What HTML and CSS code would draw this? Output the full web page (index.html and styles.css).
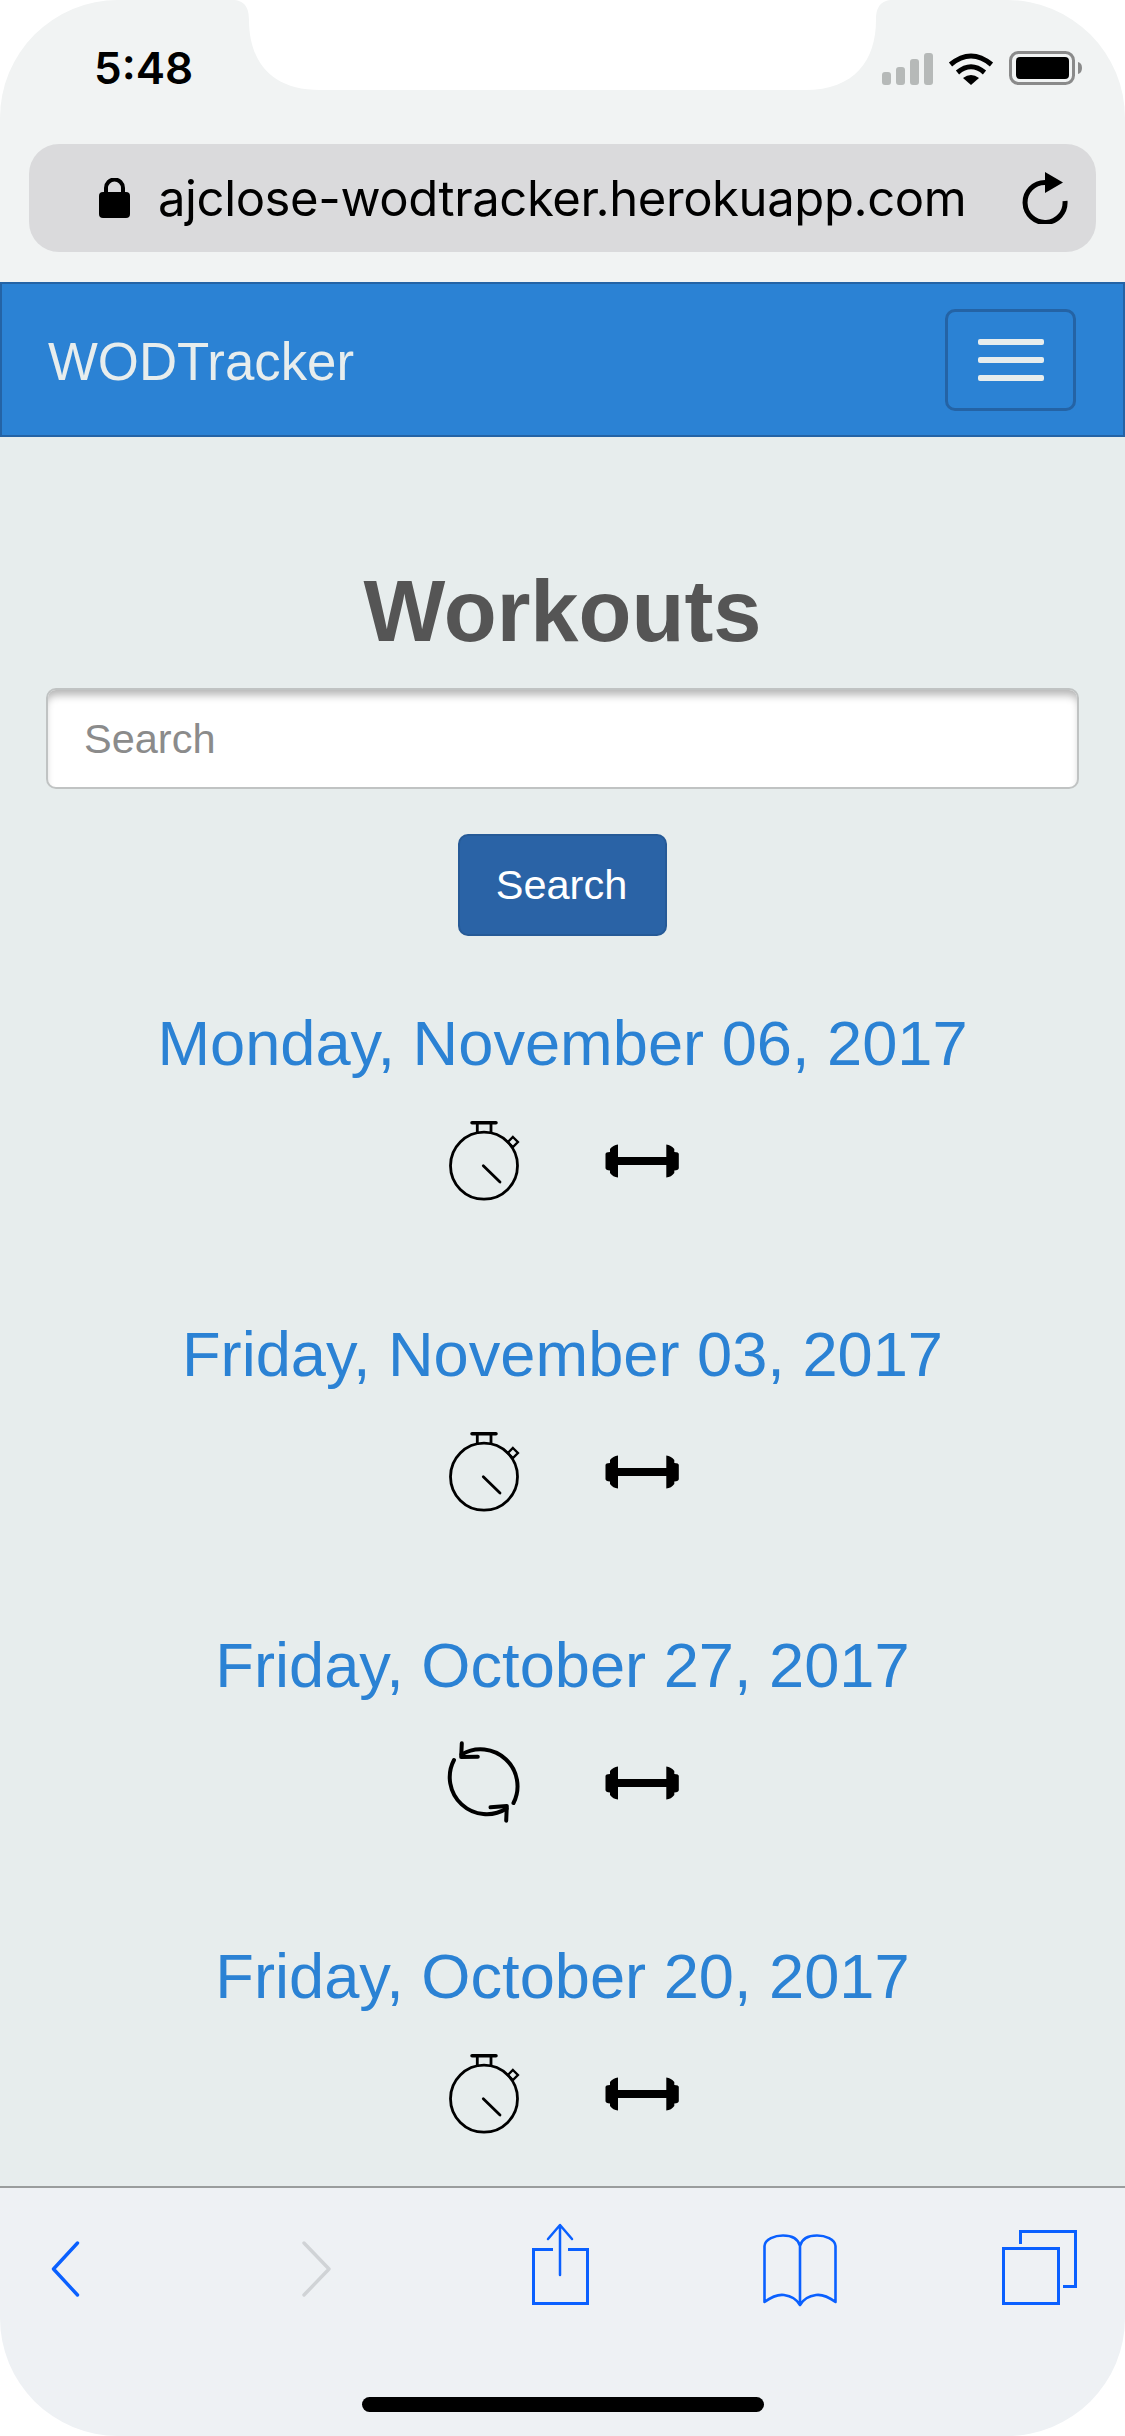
FILE: index.html
```html
<!DOCTYPE HTML>
<html>
<head>
    <meta charset="utf-8">
    <title>WODTracker</title>
    <link rel="stylesheet" href="styles.css">
</head>
<body>
    <svg class="defs" width="0" height="0">
        <symbol id="stopwatch" viewBox="0 0 90 90">
            <circle cx="45" cy="49.7" r="33.500" fill="none" stroke="#000" stroke-width="2.800"/>
            <path d="M33 6.700H57" stroke="#000" stroke-width="3.500" stroke-linecap="round"/>
            <path d="M38.300 7V18M52 7V18" stroke="#000" stroke-width="2.800"/>
            <path d="M73.900 21L78.900 26L73.900 31L68.900 26Z" fill="none" stroke="#000" stroke-width="2.400"/>
            <path d="M44.300 49.700L61 66" stroke="#000" stroke-width="2.800" stroke-linecap="round"/>
        </symbol>
        <symbol id="barbell" viewBox="0 0 90 90">
            <path d="M21 28.500Q16 29 13 33V36Q8.500 36 8.500 38V52Q8.500 54 13 54.500V57Q16 61 21 61.500V49H69.300V61.500Q74.300 61 77.300 57V54.500Q81.800 54 81.800 52V38Q81.800 36 77.300 36V33Q74.300 29 69.300 28.500V41H21Z"/>
        </symbol>
        <symbol id="rounds" viewBox="0 0 90 90">
            <g fill="none" stroke="#000" stroke-width="4" stroke-linecap="round" stroke-linejoin="round">
                <path d="M22.500 16.500A37 37 0 0 1 74.500 65"/>
                <path d="M67.500 70.500A37 37 0 0 1 15 22"/>
                <path d="M22.800 5.300L22.200 19L38.800 18.700"/>
                <path d="M51.500 69.300L67.800 68L67.200 82.700"/>
            </g>
        </symbol>
    </svg>

    <div class="screen">
        <svg class="notch" width="1125" height="92" viewBox="0 0 1125 92">
            <path d="M232 0C245 0 249 8 249 20C249 60 270 90 320 90H805C855 90 876 60 876 20C876 8 880 0 893 0Z" fill="#fff"/>
        </svg>

        <div class="chrome">
            <div class="status">
                <span class="time">5:48</span>
                <div class="status-icons">
                    <svg width="51" height="33" viewBox="0 0 51 33" fill="#b6b9b8">
                        <rect x="0" y="20" width="9" height="13" rx="3"/>
                        <rect x="14" y="15" width="9" height="18" rx="3"/>
                        <rect x="28" y="7" width="9" height="26" rx="3"/>
                        <rect x="42" y="1" width="9" height="32" rx="3"/>
                    </svg>
                    <svg class="wifi" width="46" height="33" viewBox="0 0 46 33">
                        <path d="M2.500 12.500Q23 -4.500 43.500 12.500M9.500 20.500Q23 9 36.500 20.500" fill="none" stroke="#000" stroke-width="5"/>
                        <path d="M15 26Q23 20 31 26L23 33Z"/>
                    </svg>
                    <svg class="battery" width="73" height="34" viewBox="0 0 73 34">
                        <rect x="1.500" y="1.500" width="63" height="31" rx="8" fill="none" stroke="#8a8a8a" stroke-width="3"/>
                        <rect x="7" y="6" width="53" height="22" rx="4"/>
                        <path d="M69 11Q73 12 73 17Q73 22 69 23Z" fill="#8a8a8a"/>
                    </svg>
                </div>
            </div>
            <div class="urlbar">
                <svg class="lock" width="31" height="40" viewBox="0 0 31 40">
                    <path d="M7 16V10A8.500 8.500 0 0 1 24 10V16" fill="none" stroke="#000" stroke-width="4"/>
                    <rect x="0" y="14" width="31" height="26" rx="4"/>
                </svg>
                <span class="url">ajclose-wodtracker.herokuapp.com</span>
                <svg class="reload" width="46" height="52" viewBox="0 0 46 52">
                    <path d="M23 10.500A20 20 0 1 0 43 29" fill="none" stroke="#000" stroke-width="5"/>
                    <path d="M23 0L41 10.500L23 21Z"/>
                </svg>
            </div>
        </div>

        <nav class="navbar">
            <a class="brand">WODTracker</a>
            <div class="toggle">
                <span></span>
                <span></span>
                <span></span>
            </div>
        </nav>

        <div class="main">
            <h1>Workouts</h1>
            <input class="search-input" type="text" placeholder="Search">
            <div class="search-btn">Search</div>

            <div class="workout">
                <a class="date">Monday, November 06, 2017</a>
                <div class="kinds">
                    <svg><use href="#stopwatch"/></svg>
                    <svg><use href="#barbell"/></svg>
                </div>
            </div>
            <div class="workout">
                <a class="date">Friday, November 03, 2017</a>
                <div class="kinds">
                    <svg><use href="#stopwatch"/></svg>
                    <svg><use href="#barbell"/></svg>
                </div>
            </div>
            <div class="workout">
                <a class="date">Friday, October 27, 2017</a>
                <div class="kinds">
                    <svg><use href="#rounds"/></svg>
                    <svg><use href="#barbell"/></svg>
                </div>
            </div>
            <div class="workout">
                <a class="date">Friday, October 20, 2017</a>
                <div class="kinds">
                    <svg><use href="#stopwatch"/></svg>
                    <svg><use href="#barbell"/></svg>
                </div>
            </div>
        </div>

        <div class="toolbar">
            <div class="tools">
                <svg viewBox="0 0 90 90"><path d="M57.500 21L33.500 47L57.500 73" stroke-width="3.400" stroke-linecap="round" stroke-linejoin="round"/></svg>
                <svg viewBox="0 0 90 90"><path class="off" d="M33 21L58 47L33 73" stroke-width="3.400" stroke-linecap="round" stroke-linejoin="round"/></svg>
                <svg viewBox="0 0 90 90">
                    <path d="M38 27.500H18.500V81.500H72.500V27.500H53" stroke-width="3"/>
                    <path d="M45 4V53M33 17L45 3L57 17" stroke-width="2.500" stroke-linecap="round" stroke-linejoin="round"/>
                </svg>
                <svg viewBox="0 0 90 90">
                    <path d="M45 24C43 16 36 13.500 28 13.500C20 13.500 10 17 9.500 24V80C15 76 22 72 29 73C36 74 41 76 45 83C49 76 54 74 61 73C68 72 75 76 80.500 80V24C80 17 70 13.500 62 13.500C54 13.500 47 16 45 24V82" stroke-width="2.600" stroke-linejoin="round"/>
                </svg>
                <svg viewBox="0 0 90 90">
                    <rect x="8.500" y="26.500" width="55" height="55" stroke-width="3"/>
                    <path d="M25.500 22V9.500H80.500V64.500H68" stroke-width="3"/>
                </svg>
            </div>
            <div class="home"></div>
        </div>
    </div>
</body>
</html>
```

FILE: styles.css
```css
body
{
    margin: 0;
    background: #fff;
    font-family: "Liberation Sans", Arial, sans-serif;
}

.defs
{
    display: block;
    height: 0;
}

.screen
{
    position: relative;
    display: flex;
    flex-direction: column;
    height: 2436px;
    border-radius: 118px;
    overflow: hidden;
}

.notch
{
    position: absolute;
    top: 0;
    left: 0;
}

/* browser chrome */

.chrome
{
    height: 282px;
    padding: 0 29px;
    box-sizing: border-box;
    background: #f1f3f3;
}

.status
{
    display: flex;
    justify-content: space-between;
    align-items: center;
    height: 144px;
    padding: 0 14px 8px 65px;
    box-sizing: border-box;
}

.time
{
    font-family: Inter, sans-serif;
    font-weight: 600;
    font-size: 44px;
    color: #000;
}

.status-icons
{
    display: flex;
    align-items: center;
}

.wifi { margin-left: 15px; }
.battery { margin-left: 15px; }

.urlbar
{
    display: flex;
    align-items: center;
    height: 108px;
    padding: 0 28px 0 70px;
    border-radius: 30px;
    background: #dadadc;
}

.url
{
    flex: 1;
    margin-left: 28px;
    font-family: Inter, sans-serif;
    font-size: 49px;
    letter-spacing: -0.4px;
    color: #000;
    white-space: nowrap;
}

/* site */

.navbar
{
    display: flex;
    justify-content: space-between;
    align-items: center;
    height: 155px;
    padding: 0 47px 0 46px;
    box-sizing: border-box;
    border: 2px solid #2463a5;
    background: #2b82d4;
}

.brand
{
    padding-top: 3px;
    font-size: 52.800px;
    color: #e7eded;
}

.toggle
{
    display: flex;
    flex-direction: column;
    justify-content: center;
    align-items: center;
    gap: 12px;
    width: 131px;
    height: 102px;
    box-sizing: border-box;
    border: 3px solid #2463a5;
    border-radius: 10px;
}

.toggle span
{
    display: block;
    width: 66px;
    height: 6px;
    border-radius: 2px;
    background: #e7eded;
}

.main
{
    flex: 1;
    min-height: 0;
    padding: 124px 46px 0;
    overflow: hidden;
    background: #e7eded;
    text-align: center;
}

h1
{
    margin: 0 0 27px;
    font-size: 86.700px;
    line-height: 100px;
    font-weight: bold;
    color: #555;
}

.search-input
{
    display: block;
    width: 100%;
    height: 101px;
    padding: 0 36px;
    box-sizing: border-box;
    border: 2px solid #c0c3c3;
    border-radius: 10px;
    background: #fff;
    box-shadow: inset 0 8px 8px -3px #b5b5b5;
    font-family: inherit;
    font-size: 41.500px;
}

.search-input::placeholder
{
    color: #8b8b8b;
    opacity: 1;
}

.search-btn
{
    width: 209px;
    height: 102px;
    margin: 45px auto 71px;
    box-sizing: border-box;
    border: 2px solid #265a97;
    border-radius: 10px;
    background: #2a63a6;
    color: #fff;
    font-size: 41.500px;
    line-height: 98px;
    text-indent: -2px;
}

.workout
{
    margin-bottom: 112px;
}

.date
{
    display: block;
    font-size: 63.200px;
    line-height: 72px;
    color: #2b82d4;
    white-space: nowrap;
}

.kinds
{
    display: flex;
    justify-content: center;
    gap: 68px;
    margin-top: 37px;
}

.kinds svg
{
    display: block;
    width: 90px;
    height: 90px;
}

/* safari toolbar */

.toolbar
{
    border-top: 2px solid #9a9d9d;
    padding: 34px 0 24px;
    background: #eef1f4;
}

.tools
{
    display: grid;
    grid-template-columns: 251px 244px 240px 240px 90px;
    padding-left: 20px;
}

.tools svg
{
    display: block;
    width: 90px;
    height: 90px;
    fill: none;
    stroke: #0a60ff;
}

.tools .off { stroke: #d0d3d6; }

.home
{
    width: 402px;
    height: 15px;
    margin: 85px auto 0;
    border-radius: 8px;
    background: #000;
}
```
